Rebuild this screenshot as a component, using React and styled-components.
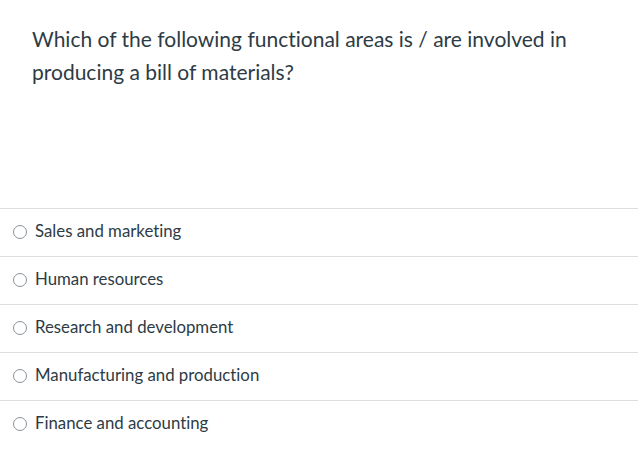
import React from 'react';
import styled, { createGlobalStyle } from 'styled-components';

const GlobalStyle = createGlobalStyle`
  html, body {
    margin: 0;
    padding: 0;
    background: #ffffff;
  }
  body {
    font-family: Lato, "Noto Sans", sans-serif;
    font-variant-ligatures: none;
    color: #2d3b45;
  }
`;

const QuestionWrapper = styled.div`
  width: 638px;
  height: 451px;
  background: #ffffff;
  overflow: hidden;
`;

const QuestionText = styled.div`
  padding: 22px 40px 0 32px;
  height: 208px;
  box-sizing: border-box;
  font-size: 21px;
  line-height: 33px;
  color: #2d3b45;
`;

const AnswerList = styled.div`
  border-top: 1px solid #dcdfe2;
`;

const AnswerRow = styled.label`
  display: flex;
  align-items: center;
  gap: 8px;
  height: 47px;
  padding-left: 13px;
  border-bottom: ${props => (props.last ? 'none' : '1px solid #dcdfe2')};
  font-size: 16.8px;
  color: #2d3b45;
`;

const Radio = styled.span`
  width: 14px;
  height: 14px;
  margin-top: -2px;
  border: 1px solid #8a9299;
  border-radius: 50%;
  box-sizing: border-box;
  flex-shrink: 0;
`;

const AnswerLabel = styled.span`
  margin-top: -5px;
`;

const answers = [
  'Sales and marketing',
  'Human resources',
  'Research and development',
  'Manufacturing and production',
  'Finance and accounting',
];

function App() {
  return (
    <QuestionWrapper>
      <GlobalStyle />
      <QuestionText>
        Which of the following functional areas is / are involved in
        <br />
        producing a bill of materials?
      </QuestionText>
      <AnswerList>
        {answers.map((a, i) => (
          <AnswerRow key={a} last={i === answers.length - 1}>
            <Radio />
            <AnswerLabel>{a}</AnswerLabel>
          </AnswerRow>
        ))}
      </AnswerList>
    </QuestionWrapper>
  );
}

export default App;
